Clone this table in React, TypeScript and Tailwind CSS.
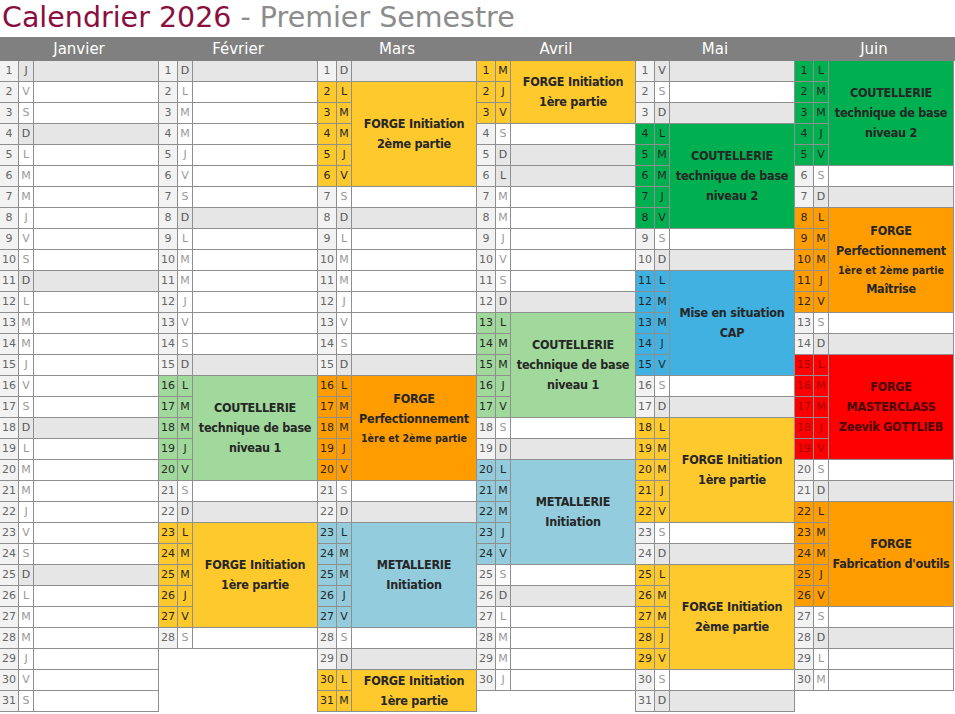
import React from 'react';

type Line = { t: string; small?: boolean };
type Ev = { start: number; end: number; bg: string; fg: string; num: string; lines: Line[] };
type Month = { name: string; days: number; first: number; holidays: number[]; events: Ev[] };

const LETTERS = ['L', 'M', 'M', 'J', 'V', 'S', 'D'];

const YELLOW = 'bg-[#fec92d]';
const LGREEN = 'bg-[#a0d99b]';
const GREEN = 'bg-[#00b050]';
const ORANGE = 'bg-[#ff9c00]';
const LBLUE = 'bg-[#93cddd]';
const BLUE = 'bg-[#41b1e1]';
const RED = 'bg-[#ff0000]';

const dark = 'text-[#262626]';

const initiation = (start: number, end: number, part: string): Ev => ({
  start, end, bg: YELLOW, fg: dark, num: dark,
  lines: [{ t: 'FORGE Initiation' }, { t: part }],
});
const coutellerie = (start: number, end: number, niveau: string, bg: string): Ev => ({
  start, end, bg, fg: dark, num: dark,
  lines: [{ t: 'COUTELLERIE' }, { t: 'technique de base' }, { t: niveau }],
});
const metallerie = (start: number, end: number): Ev => ({
  start, end, bg: LBLUE, fg: dark, num: dark,
  lines: [{ t: 'METALLERIE' }, { t: 'Initiation' }],
});

const months: Month[] = [
  { name: 'Janvier', days: 31, first: 3, holidays: [1], events: [] },
  {
    name: 'Février', days: 28, first: 6, holidays: [],
    events: [coutellerie(16, 20, 'niveau 1', LGREEN), initiation(23, 27, '1ère partie')],
  },
  {
    name: 'Mars', days: 31, first: 6, holidays: [],
    events: [
      initiation(2, 6, '2ème partie'),
      {
        start: 16, end: 20, bg: ORANGE, fg: dark, num: dark,
        lines: [{ t: 'FORGE' }, { t: 'Perfectionnement' }, { t: '1ère et 2ème partie', small: true }, { t: '' }],
      },
      metallerie(23, 27),
      initiation(30, 31, '1ère partie'),
    ],
  },
  {
    name: 'Avril', days: 30, first: 2, holidays: [6],
    events: [initiation(1, 3, '1ère partie'), coutellerie(13, 17, 'niveau 1', LGREEN), metallerie(20, 24)],
  },
  {
    name: 'Mai', days: 31, first: 4, holidays: [1, 8, 14, 25],
    events: [
      coutellerie(4, 8, 'niveau 2', GREEN),
      {
        start: 11, end: 15, bg: BLUE, fg: dark, num: dark,
        lines: [{ t: 'Mise en situation' }, { t: 'CAP' }],
      },
      initiation(18, 22, '1ère partie'),
      initiation(25, 29, '2ème partie'),
    ],
  },
  {
    name: 'Juin', days: 30, first: 0, holidays: [],
    events: [
      coutellerie(1, 5, 'niveau 2', GREEN),
      {
        start: 8, end: 12, bg: ORANGE, fg: dark, num: dark,
        lines: [{ t: 'FORGE' }, { t: 'Perfectionnement' }, { t: '1ère et 2ème partie', small: true }, { t: 'Maîtrise' }],
      },
      {
        start: 15, end: 19, bg: RED, fg: 'text-[#4a0606]', num: 'text-[#a30000]',
        lines: [{ t: 'FORGE' }, { t: 'MASTERCLASS' }, { t: 'Zeevik GOTTLIEB' }],
      },
      {
        start: 22, end: 26, bg: ORANGE, fg: dark, num: dark,
        lines: [{ t: 'FORGE' }, { t: "Fabrication d'outils" }],
      },
    ],
  },
];

function MonthColumn({ m }: { m: Month }) {
  const cells: React.ReactNode[] = [];
  for (let d = 1; d <= m.days; d++) {
    const wd = (m.first + d - 1) % 7;
    const ev = m.events.find((e) => d >= e.start && d <= e.end);
    const grey = wd === 6 || m.holidays.includes(d);
    const b = 'border-b border-[#8f8f8f]';

    cells.push(
      <div
        key={`n${d}`}
        className={`${b} border-x flex items-center justify-center text-[11px] ${
          ev ? `${ev.bg} ${ev.num}` : 'bg-[#f2f2f2] text-[#666]'
        }`}
      >
        {d}
      </div>
    );
    cells.push(
      <div
        key={`l${d}`}
        className={`${b} border-r flex items-center justify-center text-[11px] ${
          ev ? `${ev.bg} ${ev.num}` : grey ? 'bg-[#e6e6e6] text-[#555]' : 'bg-white text-[#9a9a9a]'
        }`}
      >
        {LETTERS[wd]}
      </div>
    );
    if (!ev) {
      cells.push(
        <div key={`e${d}`} className={`${b} border-r ${grey ? 'bg-[#e6e6e6]' : 'bg-white'}`} />
      );
    } else if (ev.start === d) {
      cells.push(
        <div
          key={`e${d}`}
          style={{ gridRow: `span ${ev.end - ev.start + 1}` }}
          className={`${b} border-r ${ev.bg} ${ev.fg} flex flex-col items-center justify-center text-center whitespace-nowrap font-bold font-['DejaVu_Sans_Condensed','DejaVu_Sans',sans-serif]`}
        >
          {ev.lines.map((l, i) => (
            <div
              key={i}
              className={l.small ? 'text-[10.5px] leading-[18px]' : 'text-[12.5px] leading-[20px] tracking-[-0.25px]'}
            >
              {l.t || '\u00a0'}
            </div>
          ))}
        </div>
      );
    }
  }

  return (
    <div className="-ml-px w-[160px] grid grid-cols-[20px_15px_1fr] auto-rows-[21px] content-start">
      {cells}
    </div>
  );
}

export default function App() {
  return (
    <div className="w-[955px] h-[714px] overflow-hidden bg-white font-['DejaVu_Sans',sans-serif]">
      <div className="h-[37px] pl-[2px] flex items-center text-[28.5px] leading-none whitespace-nowrap">
        <span className="text-[#8a0f3f]">Calendrier 2026</span>
        <span className="text-[#8c8c8c]">&nbsp;- Premier Semestre</span>
      </div>

      <div className="flex h-[24px] bg-[#808080]">
        {months.map((m) => (
          <div key={m.name} className="-ml-px w-[160px] flex items-center justify-center text-[15px] text-white">
            {m.name}
          </div>
        ))}
      </div>

      <div className="flex items-start">
        {months.map((m) => (
          <MonthColumn key={m.name} m={m} />
        ))}
      </div>
    </div>
  );
}
